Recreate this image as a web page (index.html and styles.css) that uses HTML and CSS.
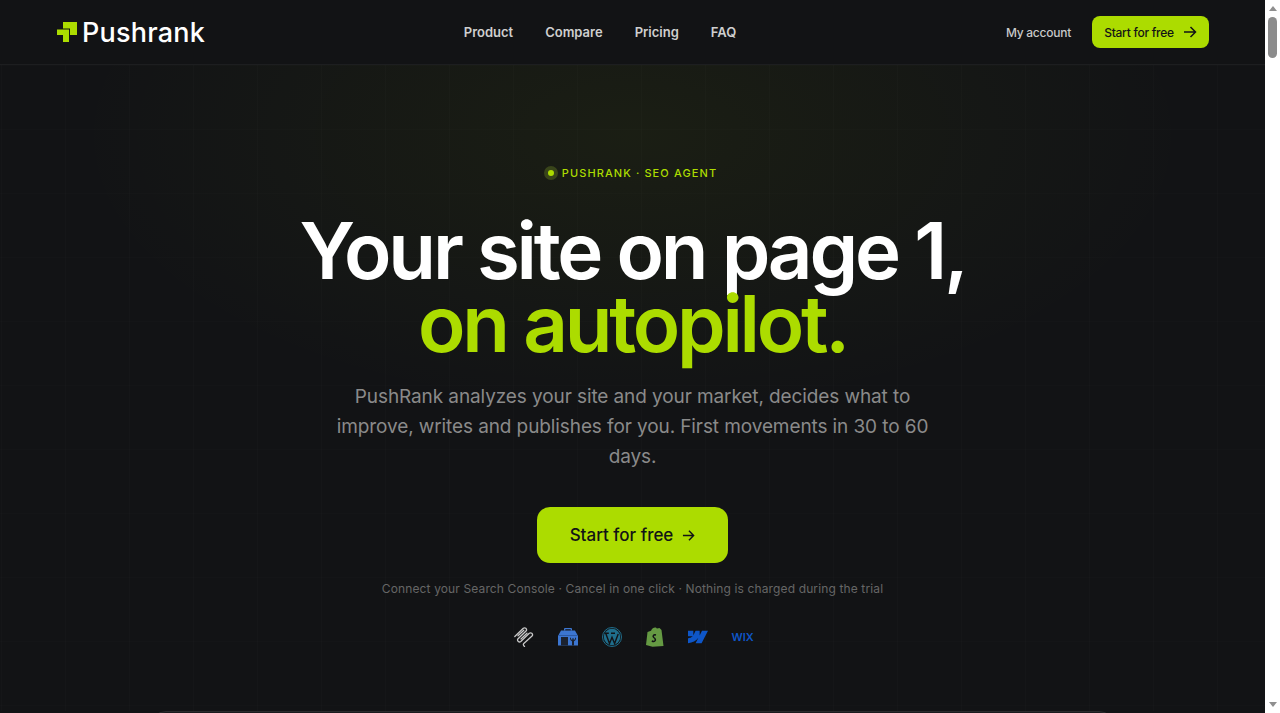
FILE: index.html
```html
<!DOCTYPE html>
<html lang="en">
<head>
    <meta charset="UTF-8">
    <meta name="viewport" content="width=device-width, initial-scale=1.0">
    <title>Pushrank</title>
    <link rel="stylesheet" href="styles.css">
</head>
<body>

    <header class="topbar">
        <a class="logo" href="#">
            <svg width="20" height="20" viewBox="0 0 20 20"><path d="M6 0h14v13h-7V6.500H6z" fill="#acdc00"/><path d="M0 7.500h12V20H6v-7H0z" fill="#acdc00"/></svg>
            <span>Pushrank</span>
        </a>
        <nav class="nav">
            <a href="#">Product</a>
            <a href="#">Compare</a>
            <a href="#">Pricing</a>
            <a href="#">FAQ</a>
        </nav>
        <div class="actions">
            <a class="account" href="#">My account</a>
            <a class="btn btn-small" href="#">Start for free
                <svg width="14" height="14" viewBox="0 0 14 14" fill="none" stroke="currentColor" stroke-width="1.5"><path d="M1 7h11.500M7.500 2l5 5-5 5"/></svg>
            </a>
        </div>
    </header>

    <main class="hero">
        <div class="eyebrow"><span class="dot"></span>PUSHRANK · SEO AGENT</div>
        <h1>Your site on page 1,<br><em>on autopilot.</em></h1>
        <p class="lead">PushRank analyzes your site and your market, decides what to improve, writes and publishes for you. First movements in 30 to 60 days.</p>
        <a class="btn btn-large" href="#">Start for free
            <svg width="13" height="13" viewBox="0 0 14 14" fill="none" stroke="currentColor" stroke-width="1.5"><path d="M1 7h11.500M7.500 2l5 5-5 5"/></svg>
        </a>
        <p class="note">Connect your Search Console · Cancel in one click · Nothing is charged during the trial</p>
        <div class="platforms">
            <svg width="20" height="20" viewBox="0 0 20 20" fill="none" stroke="#c9c9c9" stroke-width="1.300" stroke-linecap="round" stroke-linejoin="round"><path d="M.8 9.500 9.300 1.300A2 2 0 0 1 12.300 3.800L3.800 12A2 2 0 0 0 6.800 14.500L15.300 6.300A2 2 0 0 1 18.300 8.800L9.800 16.500C9 17.300 9.300 18.500 10.500 19.500"/><path d="M4 8.800 9.800 3.300M7 12 13 6.300"/></svg>
            <svg width="20" height="20" viewBox="0 0 20 20"><path d="M6 3.500V2a1 1 0 0 1 1-1h6a1 1 0 0 1 1 1v1.500h-1.300V2.300H7.300v1.200z" fill="#3c76d1"/><path d="M3 3.500h14L20 9v9.500H0V9z" fill="#3c76d1"/><path d="M3 10h7v8.500H3z" fill="#1b2230"/><path d="M0 8.500h20" stroke="#2d5aa5"/><path d="M12 11c0 2 1 2.800 2 3.200v4.300h2v-4.300c1-.4 2-1.200 2-3.200l-1-.5v2h-1.500V11h-1v1.500H13v-2z" fill="#1b2230"/></svg>
            <svg width="20" height="20" viewBox="0 0 20 20"><circle cx="10" cy="10" r="9.500" fill="none" stroke="#1f6e8c"/><circle cx="10" cy="10" r="8.200" fill="#1f6e8c"/><path d="M3.800 6.500 7.500 16.500 10 10.300l2.600 6.200 3.600-9.500M2.800 6.300h4M9 6.300h4" fill="none" stroke="#121316" stroke-width="1.400"/></svg>
            <svg width="18" height="20" viewBox="0 0 18 20"><path d="M1.500 5 5 3.800C6 1.500 7.500.5 9 .5c1 0 1.500.5 2 1l2.500-.5 2 2 2 16-11 .7L0 18z" fill="#659a43"/><path d="M10 8c-2.800-.7-3.500 1.500-2.200 2.500 1.400 1 2 1.800 1.400 3-.5 1.100-2.200 1-3.400.5" fill="none" stroke="#121316" stroke-width="1.500"/></svg>
            <svg width="20" height="14" viewBox="0 0 24 16"><path d="M24 .500l-7.700 15H9.100l3.200-6.200h-.1C9.500 12.700 5.700 14.900 0 15.500V9.400s3.600-.2 5.700-2.400H0V.500h6.400v5.300h.1L9.100.500h4.900v5.300h.1L16.800.500z" fill="#0e56c8"/></svg>
            <span class="wix">WIX</span>
        </div>
    </main>

    <section class="preview"></section>

    <div class="scrollbar" aria-hidden="true">
        <span class="arrow-up"></span>
        <span class="thumb"></span>
        <span class="arrow-down"></span>
    </div>

</body>
</html>
```

FILE: styles.css
```css
html {
    background: #121315;
}

body {
    margin: 0 15px 0 0;
    background: #121315;
    color: #ffffff;
    font-family: "Inter", sans-serif;
}

a {
    color: inherit;
    text-decoration: none;
}

.topbar {
    display: flex;
    align-items: center;
    justify-content: space-between;
    height: 64px;
    padding: 0 56px 0 57px;
    border-bottom: 1px solid #1d1e20;
}

.logo {
    display: flex;
    align-items: center;
    gap: 5px;
    width: 160px;
    font-size: 27px;
    font-weight: 500;
    letter-spacing: 0.2px;
}

.nav {
    display: flex;
    gap: 32px;
    font-size: 13px;
    font-weight: 600;
    color: #cfcfcf;
}

.actions {
    display: flex;
    align-items: center;
    justify-content: flex-end;
    gap: 21px;
    width: 226px;
    font-size: 12px;
    font-weight: 500;
    letter-spacing: -0.25px;
}

.account {
    color: #c9c9c9;
    white-space: nowrap;
}

.btn {
    display: flex;
    align-items: center;
    justify-content: center;
    background: #acdc00;
    color: #121316;
    font-weight: 500;
    white-space: nowrap;
}

.btn-small {
    gap: 9px;
    width: 117px;
    height: 32px;
    border-radius: 8px;
}

.hero {
    display: flex;
    flex-direction: column;
    align-items: center;
    height: 646px;
    box-sizing: border-box;
    padding-top: 101px;
    background-image:
        radial-gradient(ellipse 560px 280px at 50% 70px, rgba(174, 221, 0, 0.055), transparent),
        linear-gradient(rgba(255, 255, 255, 0.006) 1px, transparent 1px),
        linear-gradient(90deg, rgba(255, 255, 255, 0.01) 1px, transparent 1px);
    background-size: auto, 64px 64px, 64px 64px;
    background-position: 0 0, 0 0, 1px 0;
}

.eyebrow {
    display: flex;
    align-items: center;
    gap: 4px;
    padding-right: 4px;
    font-size: 11px;
    font-weight: 500;
    letter-spacing: 1.1px;
    color: #acdc00;
}

.dot {
    width: 6px;
    height: 6px;
    border: 4px solid #39451a;
    border-radius: 50%;
    background: #acdc00;
}

h1 {
    margin: 34px 0 0;
    font-size: 78px;
    line-height: 73px;
    font-weight: 600;
    letter-spacing: -3.25px;
    text-align: center;
}

h1 em {
    font-style: normal;
    color: #acdc00;
}

.lead {
    width: 620px;
    margin: 22px 0 0;
    font-size: 19px;
    line-height: 30px;
    letter-spacing: -0.1px;
    color: #8a8a8a;
    text-align: center;
}

.btn-large {
    gap: 9px;
    width: 191px;
    height: 56px;
    margin-top: 35px;
    border-radius: 13px;
    font-size: 17px;
}

.note {
    margin: 18px 0 0;
    font-size: 12px;
    letter-spacing: 0.13px;
    color: #666666;
}

.platforms {
    display: flex;
    align-items: center;
    justify-content: center;
    gap: 24px;
    margin-top: 31px;
}

.wix {
    width: 20px;
    font-size: 11px;
    font-weight: 600;
    color: #0e56c8;
    text-align: center;
}

.preview {
    height: 500px;
    margin: 0 150px;
    background: #1a1b1e;
    border: 1px solid #2a2b2d;
    border-radius: 16px 16px 0 0;
}

/* the window's own scrollbar, part of the screenshot */
.scrollbar {
    position: fixed;
    top: 0;
    right: 0;
    bottom: 0;
    display: flex;
    flex-direction: column;
    align-items: center;
    width: 15px;
    background: #ffffff;
}

.arrow-up,
.arrow-down {
    width: 0;
    height: 0;
    border-left: 4.500px solid transparent;
    border-right: 4.500px solid transparent;
}

.arrow-up {
    margin-top: 6px;
    border-bottom: 5px solid #8f8f8f;
}

.arrow-down {
    margin: auto 0 6px;
    border-top: 5px solid #8f8f8f;
}

.thumb {
    width: 9px;
    height: 41px;
    margin-top: 6px;
    border-radius: 5px;
    background: #8c8c8c;
}
```
